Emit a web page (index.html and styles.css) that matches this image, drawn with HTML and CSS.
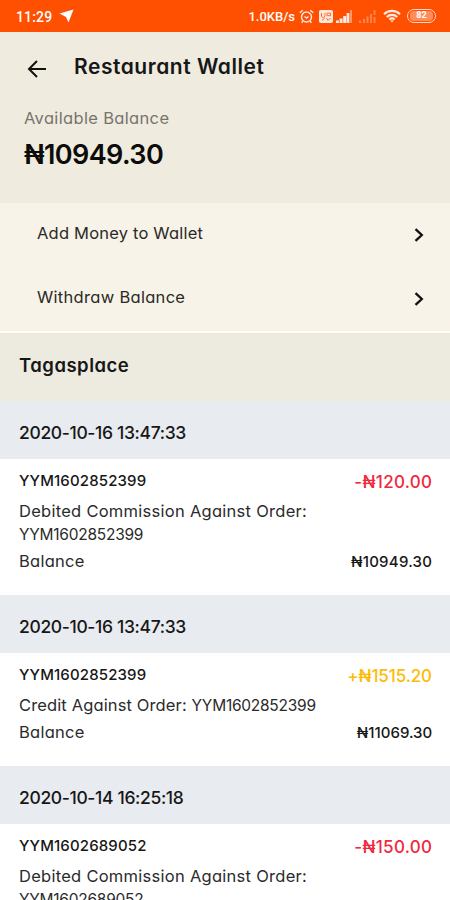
FILE: index.html
```html
<!DOCTYPE html>
<html lang="en">
<head>
<meta charset="utf-8">
<title>Restaurant Wallet</title>
<link rel="stylesheet" href="styles.css">
</head>
<body>
<div class="status">
  <span class="clock">11:29</span>
  <svg class="nav" width="15" height="15" viewBox="0 0 15 15"><path d="M0.500 4.500 14.500 0.500 9.500 13.500 7 8Z" fill="#fff"/></svg>
  <span class="speed">1.0KB/s</span>
  <svg class="alarm" width="15" height="15" viewBox="0 0 15 15" fill="none" stroke="#ffe6dc" stroke-width="1.500"><circle cx="7.500" cy="8" r="5"/><path d="M.8 3.800 3.800 1.200M14.200 3.800 11.200 1.200M5.500 7.500 7.500 9l2-1.500M3.800 12.200 2.600 13.800M11.200 12.200l1.200 1.600"/></svg>
  <svg class="volte" width="14" height="13" viewBox="0 0 14 13"><rect width="14" height="13" rx="2" fill="#ffe9df"/><path d="M2.500 3v3.500l2 1.500 1.500-2V3M8 3.200h3.500v2.500H8zM3 10.500l2.500-2M7.500 8l1.500 2.500L11.500 8" fill="none" stroke="#ff6b2c" stroke-width="1"/></svg>
  <svg class="sig" width="17" height="13" viewBox="0 0 17 13" fill="#ffe9df"><path d="M0 10.500h3v2.500H0zM3.600 8.500h3V13h-3zM7.200 6h3v7h-3zM10.600 3h2.800v10h-2.800z"/><path d="M14 0h2v13h-2z" opacity=".45"/></svg>
  <svg class="sig2" width="17" height="13" viewBox="0 0 17 13" fill="#ffe9df" opacity=".35"><path d="M0 10.500h2v2.500H0zM4 9h2v4H4zM7.500 6.500h2V13h-2zM11 4h2v9h-2zM14.500 0h2v5h-2zM14.500 7h2v6h-2z"/></svg>
  <svg class="wifi" width="18" height="14" viewBox="0 0 18 14" fill="none" stroke="#ffe9df" stroke-width="2.200"><path d="M1 5.200a11.500 11.500 0 0 1 16 0M3.800 8a7.500 7.500 0 0 1 10.400 0M6.300 10.500a4 4 0 0 1 5.400 0"/><path d="M9 13.500 7.300 11.500h3.400z" fill="#ffe9df" stroke="none"/></svg>
  <span class="battery"><span>82</span></span>
</div>
<header class="head">
  <div class="bar">
    <svg width="20" height="20" viewBox="0 0 20 20" fill="none" stroke="#11110f" stroke-width="2"><path d="M19 10H2.500M10 2 2 10l8 8"/></svg>
    <h1>Restaurant Wallet</h1>
  </div>
  <div class="label">Available Balance</div>
  <div class="total">₦10949.30</div>
</header>
<nav class="menu">
  <a class="item"><span>Add Money to Wallet</span><svg width="10" height="14" viewBox="0 0 10 14" fill="none" stroke="#11110f" stroke-width="2.300"><path d="M1.500 1.200 7.800 7l-6.300 5.800"/></svg></a>
  <a class="item second"><span>Withdraw Balance</span><svg width="10" height="14" viewBox="0 0 10 14" fill="none" stroke="#11110f" stroke-width="2.300"><path d="M1.500 1.200 7.800 7l-6.300 5.800"/></svg></a>
</nav>
<h2 class="place">Tagasplace</h2>
<section>
  <div class="date">2020-10-16 13:47:33</div>
  <div class="entry">
    <div class="row"><span class="ref">YYM1602852399</span><span class="amount debit">-₦120.00</span></div>
    <p class="desc">Debited Commission Against Order:<br><span class="num">YYM1602852399</span></p>
    <div class="row"><span class="bal">Balance</span><span class="sum">₦10949.30</span></div>
  </div>
</section>
<section>
  <div class="date">2020-10-16 13:47:33</div>
  <div class="entry">
    <div class="row"><span class="ref">YYM1602852399</span><span class="amount credit">+₦1515.20</span></div>
    <p class="desc short">Credit Against Order: <span class="num">YYM1602852399</span></p>
    <div class="row"><span class="bal">Balance</span><span class="sum narrow">₦11069.30</span></div>
  </div>
</section>
<section>
  <div class="date">2020-10-14 16:25:18</div>
  <div class="entry">
    <div class="row"><span class="ref">YYM1602689052</span><span class="amount debit">-₦150.00</span></div>
    <p class="desc">Debited Commission Against Order:<br><span class="num">YYM1602689052</span></p>
  </div>
</section>
</body>
</html>
```
FILE: styles.css
```css
* { box-sizing: border-box; }
html, body { height: 900px; overflow: hidden; }
body { margin: 0; background: #fff; color: #171717; font-family: Inter, "DejaVu Sans", sans-serif; font-feature-settings: "cv11"; }
h1, h2, p { margin: 0; }
.status { height: 32px; background: #ff4f00; color: #fff; display: flex; align-items: center; padding: 0 14px 0 16px; font: 500 14px/32px Roboto, sans-serif; }
.clock { letter-spacing: .15px; padding-top: 1px; }
.nav { margin-left: 7px; }
.speed { margin-left: auto; font-size: 13px; padding-top: 1px; }
.alarm { margin-left: 4px; }
.volte { margin-left: 5px; }
.sig { margin-left: 3px; }
.sig2 { margin-left: 6px; }
.wifi { margin-left: 7px; }
.battery { margin-left: 6px; width: 29px; height: 14px; border: 1.5px solid #ffd9c8; border-radius: 7px; padding: 1px 2px; display: flex; }
.battery span { flex: 1; border-radius: 4px; background: #ff8d5c; color: #fff; font: 700 9px/9px Roboto, sans-serif; text-align: center; }
.head { height: 171px; background: #efebdf; padding: 20px 24px 0; }
.bar { display: flex; align-items: center; height: 30px; }
.bar svg { margin: 4px 0 0 3px; }
h1 { font-size: 21px; line-height: 30px; font-weight: 600; margin-left: 27px; letter-spacing: .53px; }
.label { font-size: 16.5px; line-height: 24px; margin-top: 24px; color: #77746d; letter-spacing: .34px; }
.total { font-size: 27px; line-height: 38px; margin-top: 6px; font-weight: 600; color: #0c0c0b; letter-spacing: -.6px; }
.menu { height: 130px; background: #f7f3e8; border-bottom: 2px solid #fffdf7; }
.item { display: flex; justify-content: space-between; align-items: center; height: 64px; padding: 0 26px 2px 37px; font-size: 16.5px; letter-spacing: .2px; color: #2b2a27; }
.item span { margin-top: -2px; }
.item svg { margin-top: 2px; }
.second { letter-spacing: .3px; }
.place { height: 68px; line-height: 64px; background: #edebe0; padding-left: 19px; font-size: 18.5px; font-weight: 600; letter-spacing: .5px; }
.date { height: 58px; line-height: 64px; background: #e8ebef; padding-left: 19px; font-size: 17.5px; font-weight: 500; letter-spacing: -.35px; }
.entry { padding: 10px 18px 22px 19px; }
.row { display: flex; justify-content: space-between; height: 24px; line-height: 24px; }
.ref { font-size: 15px; font-weight: 500; letter-spacing: .14px; }
.amount { font-size: 17px; font-weight: 500; line-height: 27px; }
.debit { color: #f0293e; letter-spacing: .3px; margin-right: -.3px; }
.credit { color: #fbbc05; letter-spacing: -.1px; }
.desc { font-size: 16.5px; line-height: 23px; padding: 7px 0 3px; letter-spacing: .27px; color: #2b2b2b; }
.short { letter-spacing: .13px; }
.num { font-size: 15.5px; letter-spacing: -.25px; }
.bal { font-size: 16.5px; letter-spacing: .27px; color: #2b2b2b; }
.sum { font-size: 15px; font-weight: 500; line-height: 25px; letter-spacing: .25px; margin-right: -.2px; }
.narrow { letter-spacing: 0; }
```
